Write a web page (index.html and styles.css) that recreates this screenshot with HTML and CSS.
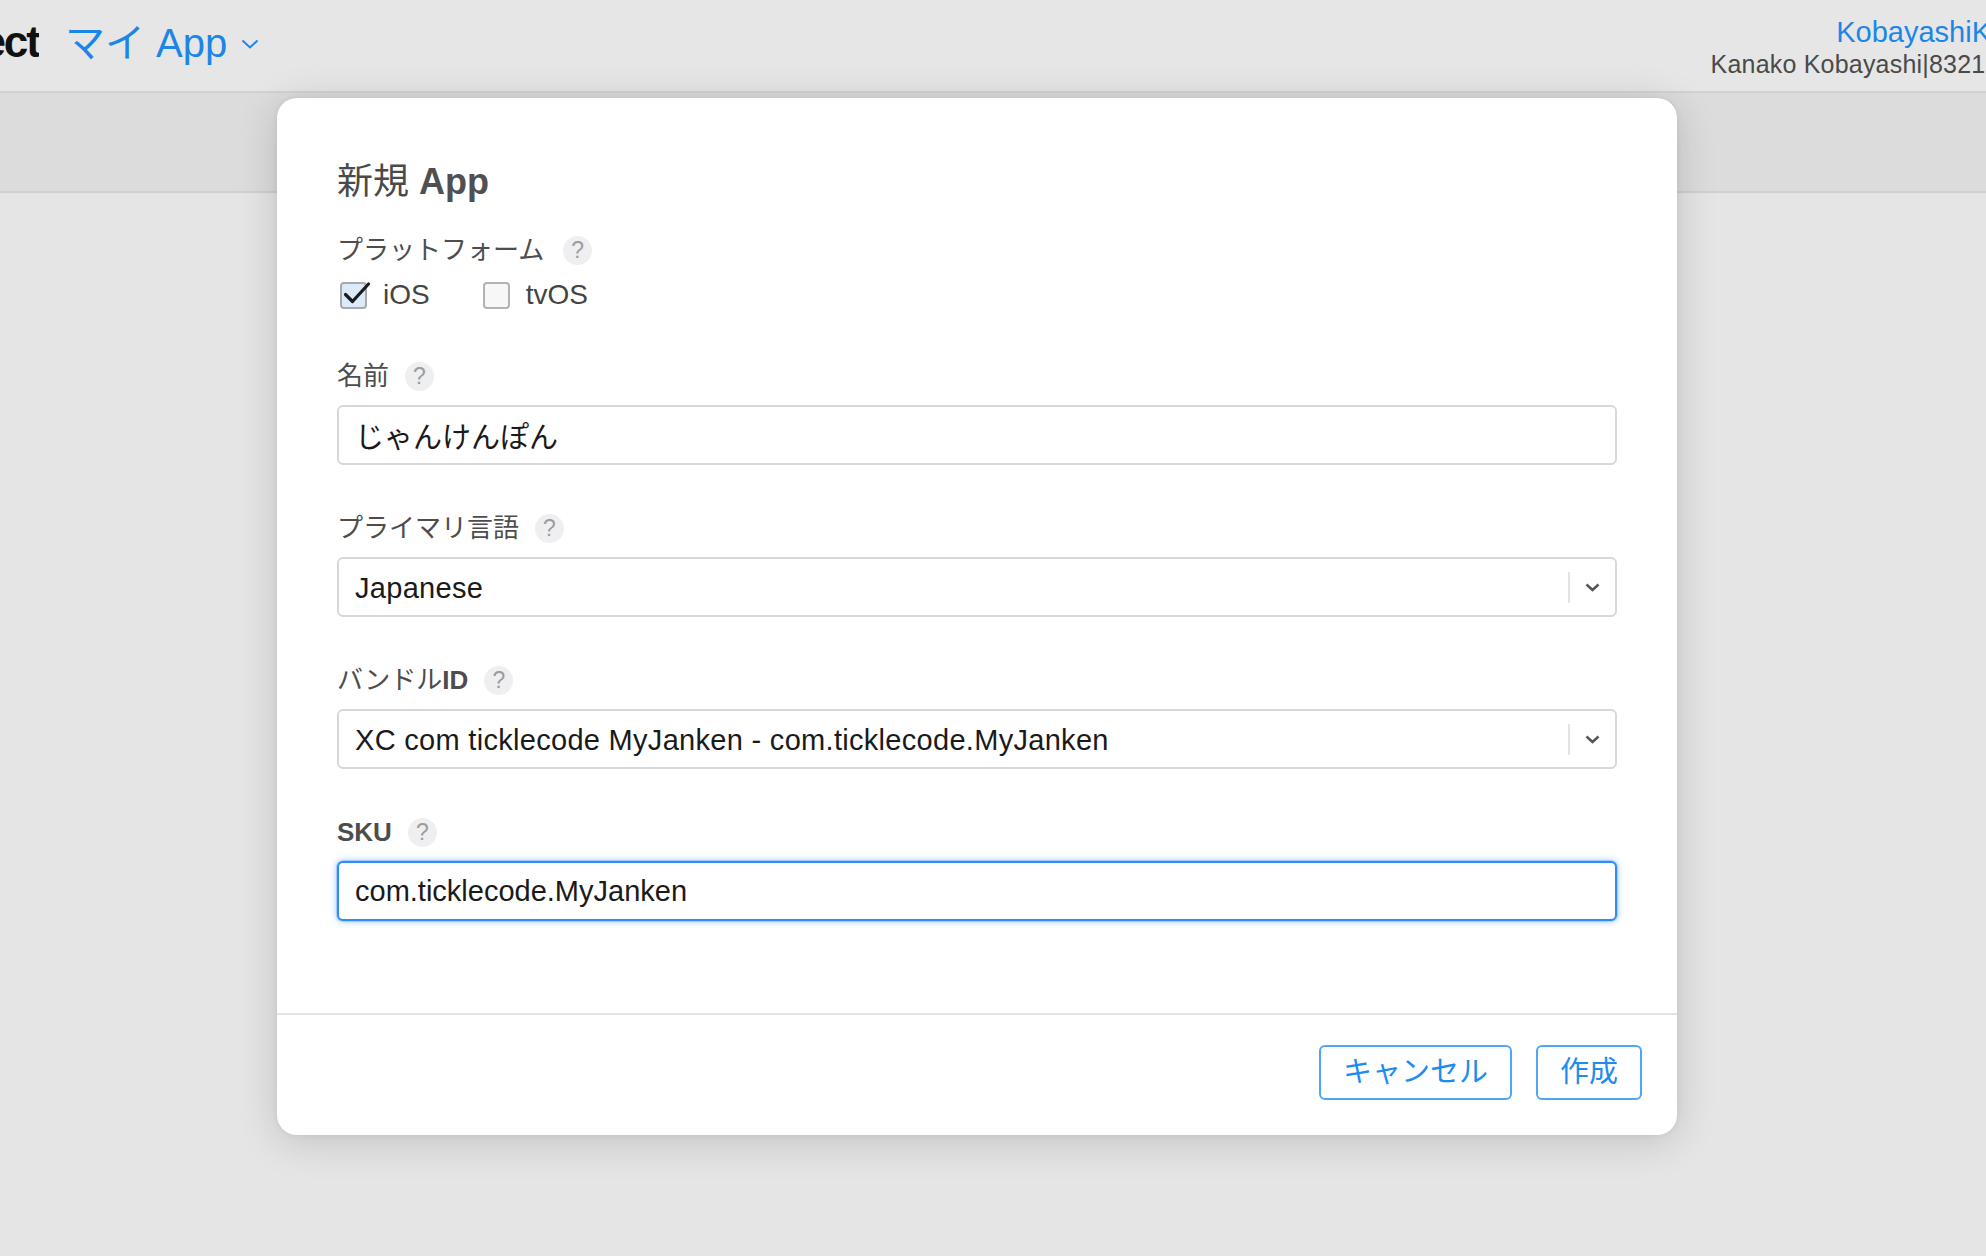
FILE: index.html
```html
<!DOCTYPE html>
<html lang="ja">
<head>
<meta charset="utf-8">
<title>新規 App</title>
<link rel="stylesheet" href="styles.css">
</head>
<body>
<header class="topbar">
  <div class="brand-clip"><span class="brand">iTunes Connect</span></div>
  <div class="app-menu">
    <span class="app-title">マイ App</span>
    <svg class="app-chev" width="18" height="10" viewBox="0 0 18 10"><polyline points="1.5,1.5 9,8.5 16.5,1.5" fill="none" stroke="#1c86e8" stroke-width="2"/></svg>
  </div>
  <div class="user">
    <div class="user-id">KobayashiKanako</div>
    <div class="user-name">Kanako Kobayashi|8321234567</div>
  </div>
</header>
<div class="subbar"></div>
<main class="page"></main>

<div class="modal">
  <div class="modal-body">
    <h1 class="modal-title">新規 <span class="title-latin">App</span></h1>

    <div class="platform">
      <div class="label-row"><span class="label">プラットフォーム</span><span class="help">?</span></div>
      <div class="checks">
        <label class="check-item">
          <span class="box checked"><svg class="tick" width="27" height="27" viewBox="0 0 27 27"><polyline points="5.5,12.5 12.5,19.5 28.5,2" fill="none" stroke="#1b1b1b" stroke-width="3.2" stroke-linecap="round" stroke-linejoin="round"/></svg></span>
          <span class="check-text">iOS</span>
        </label>
        <label class="check-item">
          <span class="box"></span>
          <span class="check-text">tvOS</span>
        </label>
      </div>
    </div>

    <div class="field">
      <div class="label-row"><span class="label">名前</span><span class="help">?</span></div>
      <input class="control" type="text" value="じゃんけんぽん" readonly>
    </div>

    <div class="field">
      <div class="label-row"><span class="label">プライマリ言語</span><span class="help">?</span></div>
      <div class="control select">
        <span class="sel-value">Japanese</span>
        <span class="sel-divider"></span>
        <span class="sel-arrow"><svg width="15" height="9" viewBox="0 0 15 9"><polyline points="1.5,1.5 7.5,7 13.5,1.5" fill="none" stroke="#555" stroke-width="2.4"/></svg></span>
      </div>
    </div>

    <div class="field">
      <div class="label-row"><span class="label">バンドル<span class="latin-bold">ID</span></span><span class="help">?</span></div>
      <div class="control select">
        <span class="sel-value">XC com ticklecode MyJanken - com.ticklecode.MyJanken</span>
        <span class="sel-divider"></span>
        <span class="sel-arrow"><svg width="15" height="9" viewBox="0 0 15 9"><polyline points="1.5,1.5 7.5,7 13.5,1.5" fill="none" stroke="#555" stroke-width="2.4"/></svg></span>
      </div>
    </div>

    <div class="field">
      <div class="label-row"><span class="label"><span class="latin-bold">SKU</span></span><span class="help">?</span></div>
      <input class="control focused" type="text" value="com.ticklecode.MyJanken" readonly>
    </div>
  </div>
  <div class="modal-footer">
    <button class="btn">キャンセル</button>
    <button class="btn">作成</button>
  </div>
</div>
</body>
</html>
```
FILE: styles.css
```css
html, body {
  margin: 0;
  padding: 0;
}
body {
  width: 1986px;
  height: 1256px;
  overflow: hidden;
  background: #e5e5e5;
  font-family: "Liberation Sans", "Noto Sans CJK JP", sans-serif;
  position: relative;
}

/* top bar */
.topbar {
  display: flex;
  align-items: flex-start;
  height: 91px;
  background: #e6e6e6;
  border-bottom: 2px solid #d2d2d2;
}
.brand-clip {
  width: 39px;
  overflow: hidden;
  display: flex;
  justify-content: flex-end;
  margin-top: 20px;
}
.brand {
  flex: none;
  white-space: nowrap;
  font-size: 44px;
  line-height: 44px;
  font-weight: 700;
  color: #111;
  letter-spacing: -2px;
}
.app-menu {
  display: flex;
  align-items: flex-start;
  margin-left: 26px;
  margin-top: 23px;
}
.app-title {
  font-size: 40px;
  line-height: 40px;
  color: #1c86e8;
  white-space: nowrap;
}
.app-chev {
  margin-left: 14px;
  margin-top: 16px;
}
.user {
  margin-left: auto;
  margin-right: -84px;
  padding-top: 15px;
  text-align: right;
  white-space: nowrap;
}
.user-id {
  font-size: 29px;
  line-height: 34px;
  color: #1c86e8;
}
.user-name {
  font-size: 25px;
  line-height: 31px;
  color: #4a4a4a;
  letter-spacing: 0.2px;
}
.subbar {
  height: 98px;
  background: #dcdcdc;
  border-bottom: 2px solid #d0d0d0;
}

/* modal */
.modal {
  position: absolute;
  left: 277px;
  top: 98px;
  width: 1400px;
  background: #fff;
  border-radius: 20px;
  box-shadow: 0 6px 40px rgba(0, 0, 0, 0.16), 0 0 6px rgba(0, 0, 0, 0.06);
}
.modal-body {
  padding: 62px 60px 92px 60px;
}
.modal-title {
  margin: 0 0 31px;
  font-size: 36px;
  line-height: 44px;
  font-weight: 400;
  color: #4a4a4a;
}
.title-latin {
  font-weight: 700;
  color: #505050;
}
.latin-bold {
  font-weight: 700;
}
.label-row {
  display: flex;
  align-items: center;
  height: 30px;
  gap: 16px;
}
.label {
  font-size: 26px;
  line-height: 30px;
  color: #4d4d4d;
  white-space: nowrap;
}
.help {
  width: 29px;
  height: 29px;
  border-radius: 50%;
  background: #efeff1;
  color: #9c9c9c;
  font-size: 23px;
  line-height: 29px;
  text-align: center;
}
.platform {
  margin-bottom: 51px;
}
.platform .label-row {
  gap: 19px;
}
.checks {
  display: flex;
  align-items: center;
  gap: 53px;
  height: 30px;
  margin-top: 15px;
  padding-left: 3px;
}
.check-item {
  display: flex;
  align-items: center;
  gap: 16px;
}
.box {
  width: 27px;
  height: 27px;
  box-sizing: border-box;
  border: 2px solid #b3b3b3;
  border-radius: 4px;
  background: #f7f7f7;
  position: relative;
}
.box.checked {
  background: #dce9f8;
  border-color: #a9a9a9;
}
.tick {
  position: absolute;
  left: -2px;
  top: -2px;
  overflow: visible;
}
.check-text {
  font-size: 28px;
  line-height: 30px;
  color: #444;
}
.field + .field {
  margin-top: 48px;
}
.field .label-row {
  margin-bottom: 14px;
}
.control {
  display: flex;
  align-items: center;
  width: 100%;
  height: 60px;
  box-sizing: border-box;
  margin: 0;
  border: 2px solid #d8d8d8;
  border-radius: 6px;
  padding: 0 16px;
  background: #fff;
  font-family: "Liberation Sans", "Noto Sans CJK JP", sans-serif;
  font-size: 29px;
  color: #1a1a1a;
  outline: none;
}
.control.focused {
  border-color: #2e8df6;
  box-shadow: 0 0 0 1px rgba(46, 141, 246, 0.25), 0 0 7px rgba(46, 141, 246, 0.55);
}
.select {
  padding-right: 0;
}
.sel-value {
  flex: 1;
  white-space: nowrap;
  letter-spacing: 0.3px;
  padding-top: 3px;
}
.sel-divider {
  width: 2px;
  height: 31px;
  background: #e3e3e3;
}
.sel-arrow {
  width: 45px;
  display: flex;
  justify-content: center;
  align-items: center;
}
.modal-footer {
  border-top: 2px solid #e4e4e4;
  padding: 30px 35px 35px;
  display: flex;
  justify-content: flex-end;
  gap: 24px;
}
.btn {
  height: 55px;
  box-sizing: border-box;
  padding: 0 22px;
  border: 2px solid #4ea6f5;
  border-radius: 6px;
  background: #fff;
  color: #1d8cf0;
  font-family: "Liberation Sans", "Noto Sans CJK JP", sans-serif;
  font-size: 29px;
  line-height: 51px;
}
```
